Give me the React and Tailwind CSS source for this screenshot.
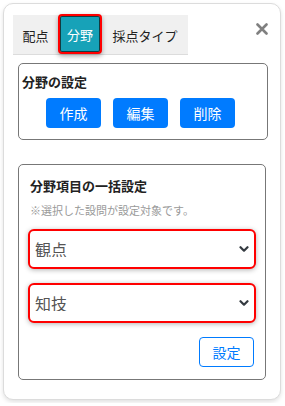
import React, { useState } from 'react';

const font = { fontFamily: '"Noto Sans CJK JP", "Noto Sans", sans-serif' };

function Chevron() {
  return (
    <svg className="pointer-events-none absolute right-[7px] top-1/2 -translate-y-1/2" width="10" height="8" viewBox="0 0 10 8">
      <path d="M1.5 2.2 L5 5.7 L8.5 2.2" fill="none" stroke="#343a40" strokeWidth="2.2" strokeLinecap="round" strokeLinejoin="round" />
    </svg>
  );
}

function FieldSelect({ value, options }) {
  return (
    <div className="relative">
      <select
        defaultValue={value}
        className="block h-[40px] w-full appearance-none rounded-[6px] border-2 border-[#ff0000] bg-white pl-[5px] pr-6 text-[16px] leading-none text-[#555] shadow-[0_1px_5px_rgba(0,0,0,0.3)] outline-none"
        style={font}
      >
        {options.map((o) => (
          <option key={o}>{o}</option>
        ))}
      </select>
      <Chevron />
    </div>
  );
}

export default function App() {
  const [tab, setTab] = useState('分野');
  const tabs = [
    { name: '配点', cls: 'w-[45px]' },
    { name: '分野', cls: 'w-[44px]' },
    { name: '採点タイプ', cls: 'w-[86px]' },
  ];

  return (
    <div className="bg-white p-[3px]" style={font}>
      <div className="h-[397px] w-[278px] rounded-[10px] border border-[#dcdcdc] bg-white pl-[9px] pr-[12px] pt-[11px] shadow-[0_2px_4px_rgba(0,0,0,0.12)]">
        <div className="flex items-start justify-between">
          <div className="flex h-[40px] w-[175px] border-b border-[#dcdcdc] bg-[#f0f0f0]">
            {tabs.map((t) =>
              t.name === tab ? (
                <button
                  key={t.name}
                  onClick={() => setTab(t.name)}
                  className={`${t.cls} -mt-px h-[40px] rounded-[4px] border-2 border-[#ff0000] bg-[#17a2b8] pt-[2px] text-center text-[13px] text-white shadow-[inset_0_0_0_1px_#123c42,0_2px_5px_rgba(0,0,0,0.35)]`}
                >
                  {t.name}
                </button>
              ) : (
                <button
                  key={t.name}
                  onClick={() => setTab(t.name)}
                  className={`${t.cls} h-[39px] pt-[2px] text-center text-[13px] text-[#222]`}
                >
                  {t.name}
                </button>
              )
            )}
          </div>
          <button className="mt-[8px]" aria-label="close">
            <svg width="12" height="12" viewBox="0 0 12 12">
              <path d="M1.5 1.5 L10.5 10.5 M10.5 1.5 L1.5 10.5" stroke="#808080" strokeWidth="2.6" strokeLinecap="round" />
            </svg>
          </button>
        </div>

        <div className="ml-[5px] mt-[8px] w-[250px] rounded-[5px] border border-[#777] pb-[11px] pl-[3px] pt-[10px]">
          <div className="text-[13px] font-bold leading-[16px] text-[#222]">分野の設定</div>
          <div className="mt-[8px] flex gap-[12px] pl-[24px]">
            {['作成', '編集', '削除'].map((b) => (
              <button key={b} className="h-[30px] w-[55px] rounded-[4px] bg-[#007bff] text-[14px] text-white">
                {b}
              </button>
            ))}
          </div>
        </div>

        <div className="ml-[5px] mt-[24px] w-[248px] rounded-[5px] border border-[#777] px-[9px] pb-[12px] pt-[13px]">
          <div className="pl-[2px] text-[13px] font-bold leading-[16px] text-[#222]">分野項目の一括設定</div>
          <div className="mt-[9px] pl-[2px] text-[11px] leading-[14px] text-[#999]">※選択した設問が設定対象です。</div>
          <div className="mt-[12px]">
            <FieldSelect value="観点" options={['観点', '領域']} />
          </div>
          <div className="mt-[14px]">
            <FieldSelect value="知技" options={['知技', '思判表', '主体']} />
          </div>
          <div className="mt-[14px] flex justify-end pr-[2px]">
            <button className="h-[30px] w-[55px] rounded-[4px] border border-[#007bff] bg-white text-[14px] text-[#007bff]">
              設定
            </button>
          </div>
        </div>
      </div>
    </div>
  );
}
